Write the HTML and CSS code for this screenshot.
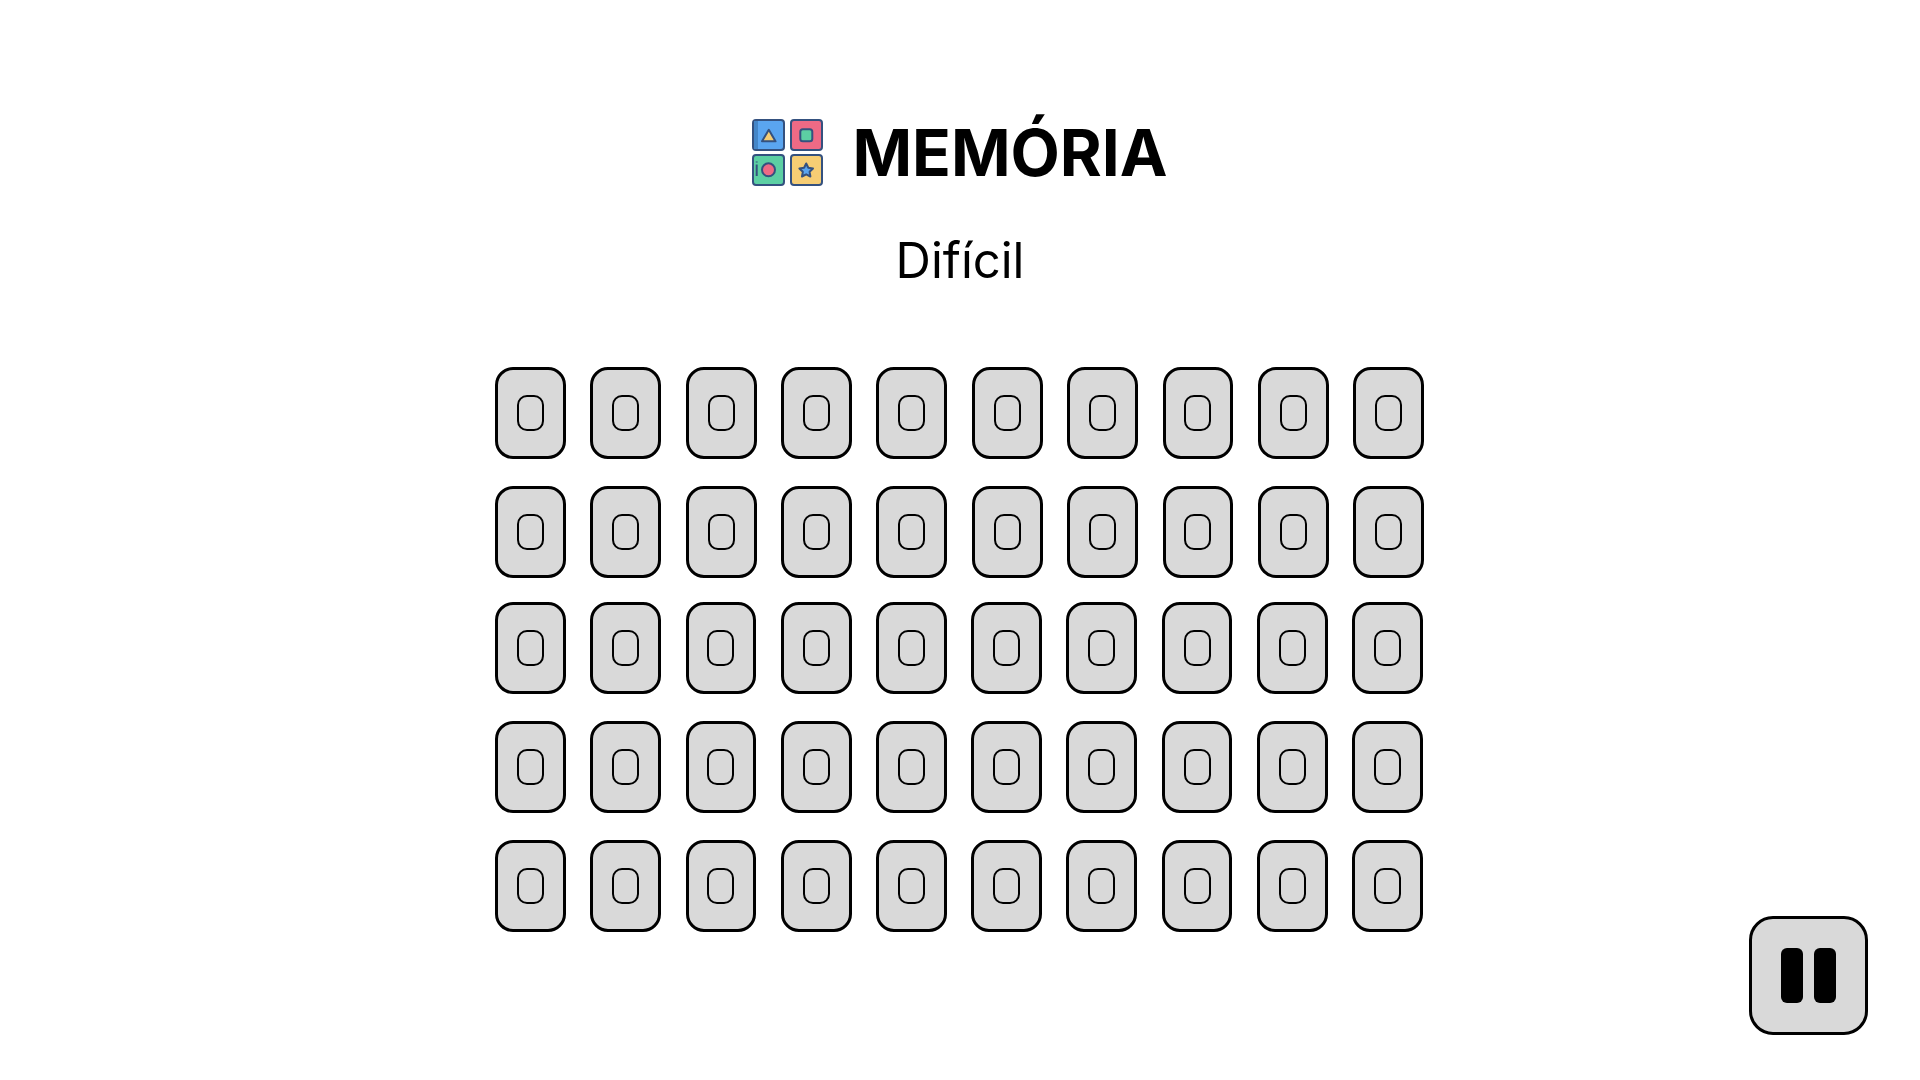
FILE: index.html
```html
<!DOCTYPE html>
<html lang="pt-BR">

<head>
    <meta charset="UTF-8">
    <meta name="viewport" content="width=device-width, initial-scale=1.0">
    <title>Memória</title>
    <link rel="stylesheet" href="styles.css">
</head>

<body>
    <div class="container">
        <header class="header">
            <svg class="logo" viewBox="0 0 71 67" aria-hidden="true">
                <g stroke="#34517f" stroke-width="2" stroke-linejoin="round">
                    <rect x="1" y="1" width="31" height="30" rx="3" fill="#5aa5f0"/>
                    <rect x="2" y="2" width="4" height="28" fill="#4486c8" stroke="none"/>
                    <path d="M16.800 10.800 L23.500 22.300 H10 Z" fill="#f6cd74"/>
                    <rect x="39" y="1" width="31" height="30" rx="3" fill="#ee6a85"/>
                    <rect x="48.300" y="10.300" width="12" height="12" rx="2.500" fill="#5ccfa3"/>
                    <rect x="1" y="36" width="31" height="30" rx="3" fill="#5ccfa3"/>
                    <path d="M4.700 42.500v1M4.700 45.500v11.500" fill="none"/>
                    <circle cx="16.500" cy="50.800" r="6.500" fill="#ee6a85"/>
                    <rect x="39" y="36" width="31" height="30" rx="3" fill="#f6cd74"/>
                    <path d="M54.200 44.500l2.100 4.300 4.700.7-3.400 3.300.8 4.700-4.200-2.200-4.200 2.200.8-4.700-3.400-3.300 4.700-.7z" fill="#5aa5f0"/>
                </g>
            </svg>
            <h1 class="title">MEMÓRIA</h1>
        </header>
        <h2 class="level">Difícil</h2>

        <div class="board">
            <div class="card-row">
                <div class="card"><span class="card-mark"></span></div>
                <div class="card"><span class="card-mark"></span></div>
                <div class="card"><span class="card-mark"></span></div>
                <div class="card"><span class="card-mark"></span></div>
                <div class="card"><span class="card-mark"></span></div>
                <div class="card"><span class="card-mark"></span></div>
                <div class="card"><span class="card-mark"></span></div>
                <div class="card"><span class="card-mark"></span></div>
                <div class="card"><span class="card-mark"></span></div>
                <div class="card"><span class="card-mark"></span></div>
            </div>
            <div class="card-row">
                <div class="card"><span class="card-mark"></span></div>
                <div class="card"><span class="card-mark"></span></div>
                <div class="card"><span class="card-mark"></span></div>
                <div class="card"><span class="card-mark"></span></div>
                <div class="card"><span class="card-mark"></span></div>
                <div class="card"><span class="card-mark"></span></div>
                <div class="card"><span class="card-mark"></span></div>
                <div class="card"><span class="card-mark"></span></div>
                <div class="card"><span class="card-mark"></span></div>
                <div class="card"><span class="card-mark"></span></div>
            </div>
            <div class="card-row card-row-tight card-row-narrow">
                <div class="card"><span class="card-mark"></span></div>
                <div class="card"><span class="card-mark"></span></div>
                <div class="card"><span class="card-mark"></span></div>
                <div class="card"><span class="card-mark"></span></div>
                <div class="card"><span class="card-mark"></span></div>
                <div class="card"><span class="card-mark"></span></div>
                <div class="card"><span class="card-mark"></span></div>
                <div class="card"><span class="card-mark"></span></div>
                <div class="card"><span class="card-mark"></span></div>
                <div class="card"><span class="card-mark"></span></div>
            </div>
            <div class="card-row card-row-narrow">
                <div class="card"><span class="card-mark"></span></div>
                <div class="card"><span class="card-mark"></span></div>
                <div class="card"><span class="card-mark"></span></div>
                <div class="card"><span class="card-mark"></span></div>
                <div class="card"><span class="card-mark"></span></div>
                <div class="card"><span class="card-mark"></span></div>
                <div class="card"><span class="card-mark"></span></div>
                <div class="card"><span class="card-mark"></span></div>
                <div class="card"><span class="card-mark"></span></div>
                <div class="card"><span class="card-mark"></span></div>
            </div>
            <div class="card-row card-row-narrow">
                <div class="card"><span class="card-mark"></span></div>
                <div class="card"><span class="card-mark"></span></div>
                <div class="card"><span class="card-mark"></span></div>
                <div class="card"><span class="card-mark"></span></div>
                <div class="card"><span class="card-mark"></span></div>
                <div class="card"><span class="card-mark"></span></div>
                <div class="card"><span class="card-mark"></span></div>
                <div class="card"><span class="card-mark"></span></div>
                <div class="card"><span class="card-mark"></span></div>
                <div class="card"><span class="card-mark"></span></div>
            </div>
        </div>
    </div>

    <button class="pause-btn" aria-label="Pausar">
        <span class="pause-bar"></span>
        <span class="pause-bar"></span>
    </button>
</body>

</html>
```

FILE: styles.css
```css
html,
body {
    margin: 0;
    height: 100%;
}

body {
    font-family: Inter, "Liberation Sans", sans-serif;
    background-color: #fff;
    color: #000;
    position: relative;
    overflow: hidden;
}

.container {
    display: flex;
    flex-direction: column;
    align-items: center;
    padding-top: 114px;
}

.header {
    display: flex;
    align-items: center;
    gap: 29px;
}

.logo {
    width: 71px;
    height: 67px;
}

.title {
    margin: 0;
    font-size: 64px;
    font-weight: 700;
    line-height: 77px;
}

.level {
    margin: 41px 0 0;
    font-size: 49px;
    font-weight: 400;
    line-height: 58px;
}

.board {
    display: flex;
    flex-direction: column;
    gap: 27.500px;
    width: 929.300px;
    margin-top: 77.400px;
    margin-left: -0.500px;
}

.card-row {
    display: flex;
    gap: 24.550px;
}

.card-row-tight {
    margin-top: -3px;
}

.card-row-narrow {
    gap: 24.430px;
}

.card {
    box-sizing: border-box;
    display: flex;
    align-items: center;
    justify-content: center;
    width: 70.800px;
    height: 91.500px;
    background-color: #d9d9d9;
    border: 3px solid #000;
    border-radius: 18px;
}

.card-mark {
    box-sizing: border-box;
    width: 27px;
    height: 35.500px;
    border: 2px solid #000;
    border-radius: 10px;
}

.pause-btn {
    position: absolute;
    right: 52px;
    bottom: 45px;
    box-sizing: border-box;
    display: flex;
    align-items: center;
    justify-content: center;
    gap: 11px;
    width: 119px;
    height: 119px;
    padding: 0;
    background-color: #d9d9d9;
    border: 3px solid #000;
    border-radius: 24px;
    cursor: pointer;
}

.pause-bar {
    width: 22px;
    height: 55px;
    background-color: #000;
    border-radius: 6px;
}
```
